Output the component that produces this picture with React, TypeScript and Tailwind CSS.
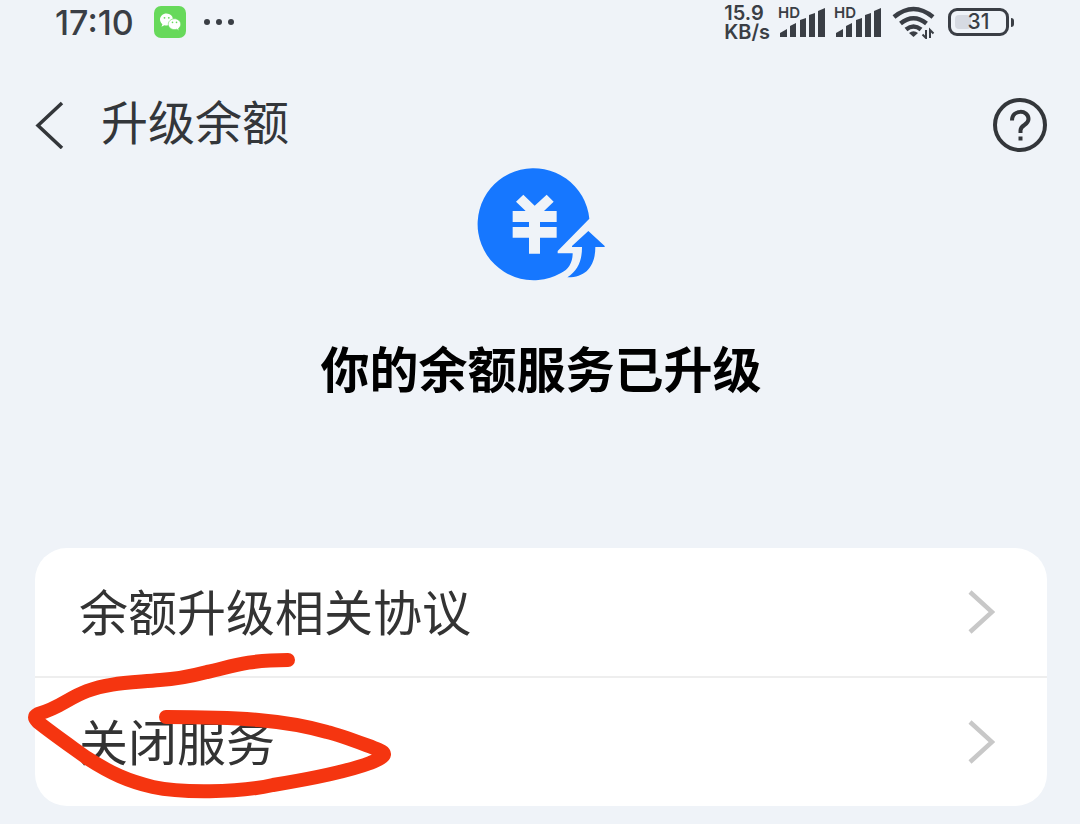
const SignalBars = () => (
  <div className="relative h-8 w-12">
    <svg viewBox="0 0 48 32" className="h-8 w-12" fill="#3a3e45" aria-hidden="true">
      <path d="M2 31v-4l7-4v8z" />
      <path d="M12 31V20l6-3v14z" />
      <path d="M22 31V14l6-2v19z" />
      <path d="M31 31V9l6-2v24z" />
      <path d="M40 31V5l7-3v29z" />
    </svg>
    <span className="absolute left-0 top-0 text-[15px] leading-[14px] font-semibold">HD</span>
  </div>
);

const StatusBar = () => (
  <div className="flex h-11 items-center justify-between pl-[55px] pr-[66px] text-[#3a3e45]">
    <div className="flex items-center">
      <span className="pt-[2px] text-[34px] leading-[44px] font-medium">17:10</span>
      <svg viewBox="0 0 32 32" className="ml-5 h-8 w-8" aria-label="微信">
        <rect width="32" height="32" rx="7" fill="#67d95b" />
        <path
          d="M12.500 7.500C8.900 7.500 6 10.200 6 13.600c0 1.800 1 3.500 2.400 4.600L7.500 20.800l2.900-1.500c.7.200 1.500.3 2.300.3.900 0 1.800-.2 2.600-.5C21 17 20 7.500 12.500 7.500z"
          fill="#fff"
        />
        <path
          d="M20.500 12.800c-3.400 0-6.200 2.400-6.200 5.400s2.800 5.400 6.200 5.400c.8 0 1.500-.1 2.200-.4l2.300 1.300-.5-2.100c1.400-1 2.200-2.500 2.200-4.200 0-3-2.800-5.400-6.200-5.400z"
          fill="#fff"
          stroke="#67d95b"
          strokeWidth=".6"
        />
        <g fill="#67d95b">
          <circle cx="10.500" cy="11.800" r=".9" />
          <circle cx="14.800" cy="11.800" r=".9" />
          <circle cx="18.500" cy="16.400" r=".8" />
          <circle cx="22.500" cy="16.400" r=".8" />
        </g>
      </svg>
      <svg viewBox="0 0 32 8" className="ml-[17px] h-2 w-8" fill="#3a3e45" aria-hidden="true">
        <circle cx="4" cy="4" r="3" />
        <circle cx="16" cy="4" r="3" />
        <circle cx="28" cy="4" r="3" />
      </svg>
    </div>

    <div className="flex items-center">
      <p className="mr-2 pt-[2px] text-[20px] leading-[19px] font-semibold">
        15.9
        <br />
        KB/s
      </p>
      <SignalBars />
      <div className="w-2" />
      <SignalBars />
      <svg viewBox="0 0 44 34" className="ml-[10px] h-[34px] w-11" fill="none" stroke="#3a3e45" strokeWidth="4.500" aria-label="Wi-Fi">
        <path d="M2 12Q21.500-4 41 12" />
        <path d="M8.500 18.500Q21.500 8 34.500 18.500" />
        <path d="M14 24.500Q21.500 18.500 29 24.500" />
        <path d="M21.500 32l-4.500-4q4.500-3.600 9 0z" fill="#3a3e45" stroke="none" />
        <path d="M34 25v8l-3.500-3.500M38 33v-8l3.500 3.500" strokeWidth="2" />
      </svg>
      <div className="ml-3 flex items-center">
        <div className="relative flex h-7 w-[61px] items-center justify-center rounded-[9px] border-[3px] border-[#3a3e45]">
          <div className="absolute inset-y-1 left-1 w-4 rounded-sm bg-[#d6dae2]" />
          <span className="relative text-[21px] leading-[22px] font-medium">31</span>
        </div>
        <div className="ml-[2px] h-[9px] w-[3px] rounded-r bg-[#3a3e45]" />
      </div>
    </div>
  </div>
);

const BalanceLogo = () => (
  <svg viewBox="51 38 387 342" className="h-[114px] w-[129px]" fill="#1677ff" aria-hidden="true">
    <path d="M388 193L293 290V297H338C338 325 325 346 303 356A168 168 0 1 1 388 193Z" />
    <path d="M385 230L434 275V278H406C406 335 378 370 322 369C353 349 366 321 366 278H336V275Z" />
    <path
      d="M190 121L224 154L260 121L281 142L252 170H290V203H240V218H290V250H240V298H207V250H158V218H207V203H158V170H197L168 142Z"
      fill="#eff3f8"
    />
  </svg>
);

const rows = ["余额升级相关协议", "关闭服务"];

export default function App() {
  return (
    <div className="min-h-screen bg-[#eff3f8] font-['Inter','Noto_Sans_CJK_SC',sans-serif]">
      <StatusBar />

      <header className="flex h-[123px] items-center justify-between px-[33px] pt-[39px] text-[#33363a]">
        <div className="flex items-center">
          <button type="button" aria-label="返回" className="mr-9">
            <svg viewBox="0 0 32 48" className="h-12 w-8" fill="none" stroke="#33363a" strokeWidth="3.500">
              <path d="M29 2L5 24.500L29 47" />
            </svg>
          </button>
          <h1 className="pb-1 text-[47px] leading-[72px]">升级余额</h1>
        </div>
        <button type="button" aria-label="帮助">
          <svg viewBox="0 0 54 54" className="h-[54px] w-[54px]" fill="none" stroke="#33363a" strokeWidth="4">
            <circle cx="27" cy="27" r="25" />
            <path d="M19 22.500C19 11 35.500 11.500 35.500 21C35.500 27.500 27.500 26.500 27.500 32.500V35" />
            <path d="M25.500 40.500H29.500" />
          </svg>
        </button>
      </header>

      <main className="pr-[33px] pb-4 pl-[35px]">
        <section className="flex flex-col items-center">
          <BalanceLogo />
          <h2 className="mt-[54px] text-[49px] leading-[72px] font-bold text-black">你的余额服务已升级</h2>
        </section>

        <div className="relative mt-[141px]">
          <ul className="divide-y-2 divide-[#eeeeee] rounded-[32px] bg-white">
            {rows.map((label) => (
              <li key={label}>
                <button type="button" className="flex h-32 w-full items-center justify-between pr-[52px] pl-11 text-left">
                  <span className="pt-1 text-[49px] leading-[72px] text-[#333333]">{label}</span>
                  <svg viewBox="0 0 28 44" className="h-11 w-7" fill="none" stroke="#c8c8c8" strokeWidth="4.500" aria-hidden="true">
                    <path d="M3 2L25 22L3 42" />
                  </svg>
                </button>
              </li>
            ))}
          </ul>

          {/* hand-drawn marker around the close row */}
          <svg
            viewBox="20 640 380 170"
            className="pointer-events-none absolute -left-[15px] top-[92px] h-[170px] w-[380px]"
            fill="none"
            stroke="#f53510"
            strokeWidth="14"
            strokeLinecap="round"
            strokeLinejoin="round"
            aria-hidden="true"
          >
            <path d="M288 660C243 660 228 668 207 672C188 677 178 679 160 680C128 683 108 683 87 691C68 698 60 708 38 714C34 716 34 718 38 722C53 734 69 745 87 758C112 774 128 781 153 787C180 793 237 793 273 785C310 779 343 773 370 763C389 755 387 753 374 748C350 739 340 735 327 732C285 720 240 717 166 717" />
          </svg>
        </div>
      </main>
    </div>
  );
}
